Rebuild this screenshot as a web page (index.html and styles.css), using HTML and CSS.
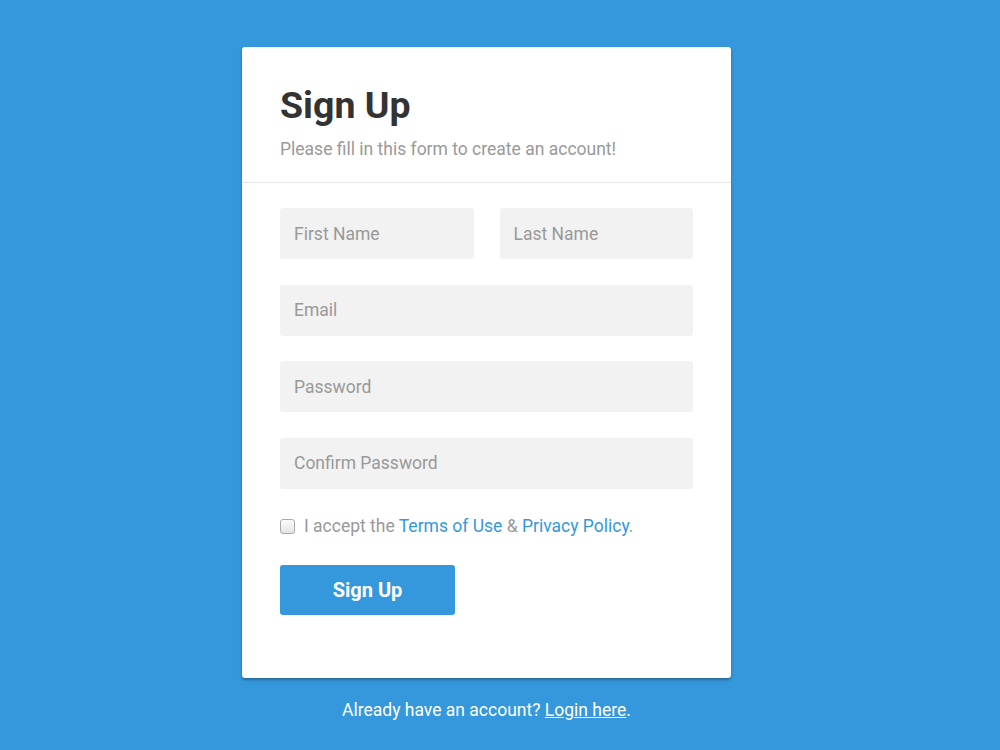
FILE: index.html
```html
<!DOCTYPE html>
<html lang="en">
<head>
<meta charset="UTF-8">
<meta name="viewport" content="width=device-width, initial-scale=1.0">
<title>Sign Up</title>
<link rel="stylesheet" href="styles.css">
</head>
<body>

  <div class="page">
      <div class="signup-form">
          <div class="form-header">
              <h2>Sign Up</h2>
              <p>Please fill in this form to create an account!</p>
          </div>
          <form id="signup-form">
              <div class="form-row">
                  <input type="text" placeholder="First Name">
                  <input type="text" placeholder="Last Name">
              </div>
              <div class="form-row">
                  <input type="email" placeholder="Email">
              </div>
              <div class="form-row">
                  <input type="password" placeholder="Password">
              </div>
              <div class="form-row">
                  <input type="password" placeholder="Confirm Password">
              </div>
              <label class="terms">
                  <input type="checkbox">
                  <span>I accept the <a href="#">Terms of Use</a> &amp; <a href="#">Privacy Policy</a>.</span>
              </label>
              <button type="submit">Sign Up</button>
          </form>
      </div>
      <div class="login-link">Already have an account? <a href="#">Login here</a>.</div>
  </div>

</body>
</html>
```

FILE: styles.css
```css
body {
  margin: 0;
  background: #3598dc;
  font-family: Roboto, "Liberation Sans", sans-serif;
  color: #999;
}

/* leave room on the right, like a page with a scrollbar */
.page {
  width: 973px;
}

.signup-form {
  width: 489px;
  margin: 47px auto 0;
  background: #FFF;
  border-radius: 3px;
  box-shadow: 0 2px 3px rgba(0, 0, 0, 0.3);
  padding-bottom: 63px;
}

.form-header {
  padding: 36px 38px 23px;
  border-bottom: 1px solid #e5e5e5;
}

.form-header h2 {
  margin: 0 0 12px;
  font-size: 37.5px;
  font-weight: 700;
  color: #333;
}

.form-header p {
  margin: 0;
  font-size: 17.5px;
}

#signup-form {
  padding: 25px 38px 0;
}

.form-row {
  display: flex;
  gap: 26px;
  margin-bottom: 25.5px;
}

.form-row input {
  flex: 1;
  min-width: 0;
  height: 51px;
  box-sizing: border-box;
  padding: 0 14px;
  border: none;
  border-radius: 3px;
  background: #f2f2f2;
  font-family: inherit;
  font-size: 17.5px;
  color: #333;
}

.form-row input::placeholder {
  color: #999;
}

.terms {
  display: flex;
  align-items: center;
  gap: 9px;
  font-size: 17.5px;
  padding-top: 2px;
}

.terms input {
  appearance: none;
  margin: 0;
  width: 15px;
  height: 15px;
  box-sizing: border-box;
  border: 1px solid #a9a9a9;
  border-radius: 3px;
  background: linear-gradient(#fcfcfc, #e4e4e4);
}

.terms a {
  color: #3598dc;
  text-decoration: none;
}

#signup-form > button {
  display: block;
  width: 175px;
  height: 50px;
  margin-top: 29px;
  background-color: #3598dc;
  color: white;
  border: none;
  border-radius: 3px;
  font-family: inherit;
  font-size: 20px;
  font-weight: 700;
  cursor: pointer;
}

.login-link {
  text-align: center;
  color: #FFF;
  font-size: 17.5px;
  margin-top: 22px;
}

.login-link a {
  color: #FFF;
  text-decoration: underline;
}
```
